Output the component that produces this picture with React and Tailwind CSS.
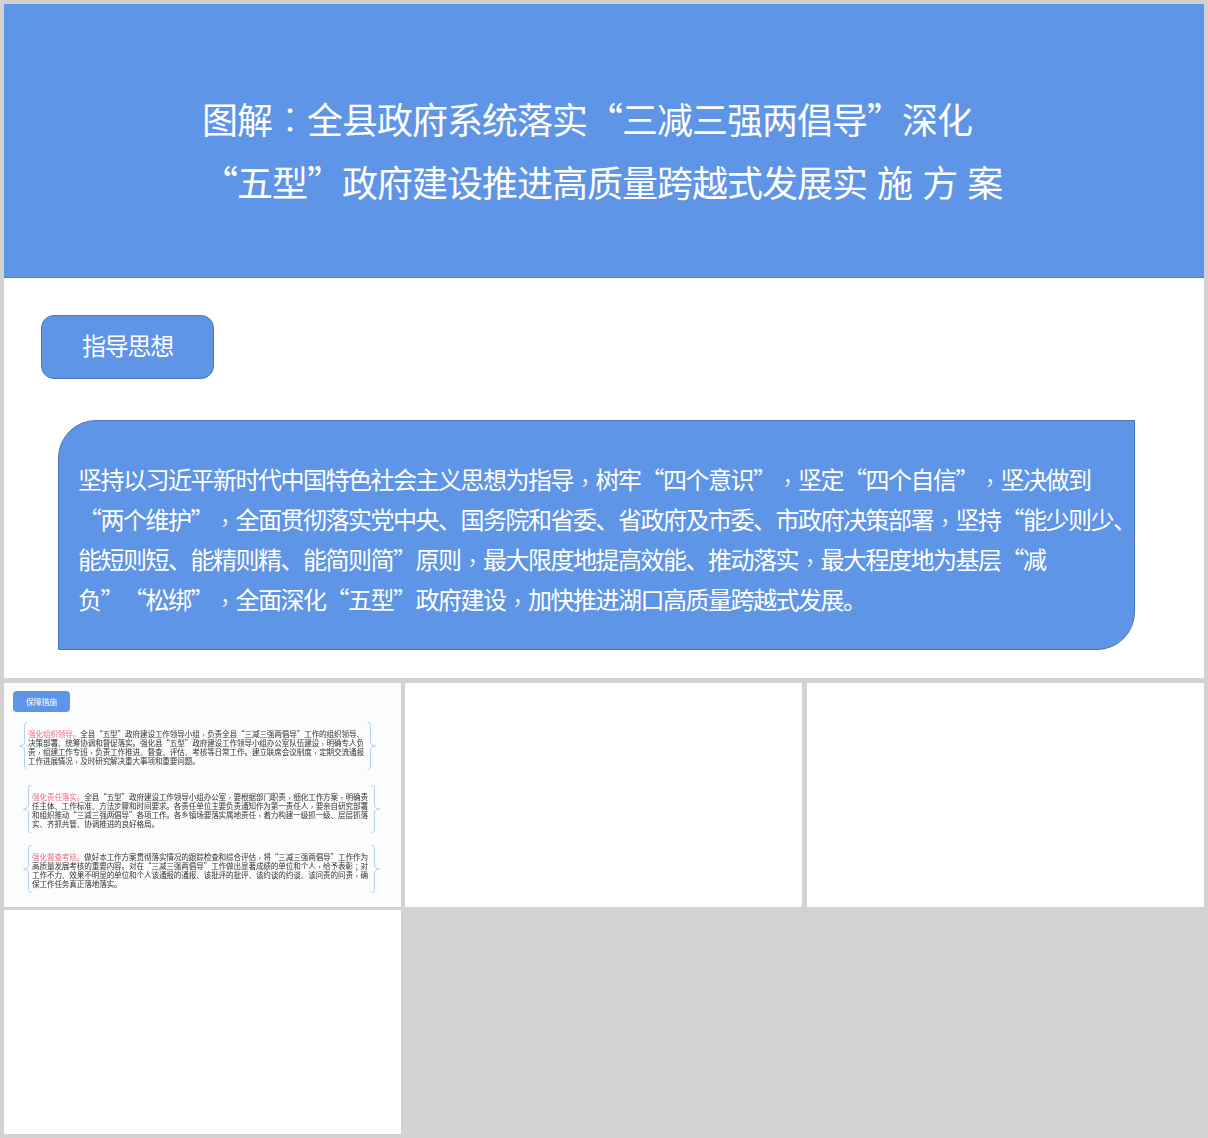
import React from 'react';

const cjk = { fontFamily: '"Noto Sans CJK SC", "Noto Sans", sans-serif' };

const guideLines = [
    '坚持以习近平新时代中国特色社会主义思想为指导，树牢“四个意识”，坚定“四个自信”，坚决做到',
    '“两个维护”，全面贯彻落实党中央、国务院和省委、省政府及市委、市政府决策部署，坚持“能少则少、',
    '能短则短、能精则精、能简则简”原则，最大限度地提高效能、推动落实，最大程度地为基层“减',
    '负”“松绑”，全面深化“五型”政府建设，加快推进湖口高质量跨越式发展。',
];

const measures = [
    {
        head: '强化组织领导。',
        lines: [
            '全县“五型”政府建设工作领导小组，负责全县“三减三强两倡导”工作的组织领导、',
            '决策部署、统筹协调和督促落实。强化县“五型”政府建设工作领导小组办公室队伍建设，明确专人负',
            '责，组建工作专班，负责工作推进、督查、评估、考核等日常工作。建立联席会议制度，定期交流通报',
            '工作进展情况，及时研究解决重大事项和重要问题。',
        ],
        box: 'ml-[15px] mt-[10px]',
    },
    {
        head: '强化责任落实。',
        lines: [
            '全县“五型”政府建设工作领导小组办公室，要根据部门职责，细化工作方案，明确责',
            '任主体、工作标准、方法步骤和时间要求。各责任单位主要负责通知作为第一责任人，要亲自研究部署',
            '和组织推动“三减三强两倡导”各项工作。各乡镇场要落实属地责任，着力构建一级抓一级、层层抓落',
            '实、齐抓共管、协调推进的良好格局。',
        ],
        box: 'ml-[19px] mt-[15px]',
    },
    {
        head: '强化督查考核。',
        lines: [
            '做好本工作方案贯彻落实情况的跟踪检查和综合评估，将“三减三强两倡导”工作作为',
            '高质量发展考核的重要内容。对在“三减三强两倡导”工作做出显著成绩的单位和个人，给予表彰；对',
            '工作不力、效果不明显的单位和个人该通报的通报、该批评的批评、该约谈的约谈、该问责的问责，确',
            '保工作任务真正落地落实。',
        ],
        box: 'ml-[19px] mt-[12px]',
    },
];

// commas and colons sit centred in the reference, the TC face draws them that way
const Text = ({ children }) =>
    children.split(/([，：；])/).map((part, i) =>
        i % 2 ? (
            <span
                key={i}
                className={part === '：' ? 'font-light' : 'font-light align-[-0.14em]'}
                style={{ fontFamily: '"Noto Sans CJK TC", sans-serif' }}
            >
                {part}
            </span>
        ) : (
            part
        )
    );

const Brace = ({ flip }) => (
    <svg width="9" height="48" viewBox="0 0 9 48" fill="none" className={`shrink-0 ${flip ? '-scale-x-100' : ''}`}>
        <path d="M8.5 .5C6.5 .5 5.5 1.5 5.5 3.5V20C5.5 22.5 3 24 .5 24C3 24 5.5 25.5 5.5 28V44.5C5.5 46.5 6.5 47.5 8.5 47.5" stroke="#a9c3e8" strokeWidth="0.8" />
    </svg>
);

const MeasureRow = ({ item }) => (
    <div className={`flex items-center w-[357px] ${item.box}`}>
        <Brace />
        <div className="flex-1 min-w-0 pt-[1px] text-[7.6px] leading-[9px] tracking-[-0.13px] text-[#333] blur-[0.25px]">
            <div className="whitespace-nowrap h-[9px]">
                <span className="text-[#ee6f82]">{item.head}</span>
                <Text>{item.lines[0]}</Text>
            </div>
            {item.lines.slice(1).map((line) => (
                <div key={line} className="whitespace-nowrap h-[9px]"><Text>{line}</Text></div>
            ))}
        </div>
        <Brace flip />
    </div>
);

export default function App() {
    return (
        <div className="w-[1208px] h-[1138px] bg-[#d2d2d2] pt-[4px] px-[4px] overflow-hidden [text-spacing-trim:space-all]" style={cjk}>
            <div className="w-[1200px] h-[674px] bg-white">
                <div className="h-[274px] bg-[#5f95e7] border-b border-[#4f7fc4] pl-[198px] pt-[83px] text-[36px] leading-[63px] tracking-[-1px] text-white font-normal whitespace-nowrap [word-spacing:3px]">
                    <div className="h-[63px]"><Text>图解：全县政府系统落实“三减三强两倡导”深化</Text></div>
                    <div className="h-[63px]">“五型”政府建设推进高质量跨越式发展实 施 方 案</div>
                </div>
                <div className="pt-[37px]">
                    <div className="ml-[37px] w-[173px] h-[64px] pb-[4px] rounded-[13px] bg-[#5f95e7] border border-[#4a76b5] flex items-center justify-center text-[24px] tracking-[-1.2px] text-white font-normal">
                        指导思想
                    </div>
                    <div className="mt-[41px] ml-[54px] w-[1077px] h-[230px] bg-[#5f95e7] border border-[#4a76b5] rounded-tl-[38px] rounded-br-[38px] pl-[19px] pt-[38px] text-[24px] leading-[40px] tracking-[-1.5px] text-white font-normal whitespace-nowrap">
                        {guideLines.map((line) => (
                            <div key={line} className="h-[40px]"><Text>{line}</Text></div>
                        ))}
                    </div>
                </div>
            </div>
            <div className="mt-[5px] grid grid-cols-[397px_398px_397px] gap-x-[4px] gap-y-[3px]">
                <div className="h-[224px] bg-[#fbfcfd] pt-[8px]">
                    <div className="ml-[9px] w-[57px] h-[21px] rounded-[4px] bg-[#5f95e7] flex items-center justify-center text-[8px] tracking-[-0.3px] text-white blur-[0.25px]">
                        保障措施
                    </div>
                    {measures.map((item) => (
                        <MeasureRow key={item.head} item={item} />
                    ))}
                </div>
                <div className="h-[224px] w-[397px] bg-white" />
                <div className="h-[224px] bg-white" />
                <div className="h-[224px] bg-white" />
            </div>
        </div>
    );
}
